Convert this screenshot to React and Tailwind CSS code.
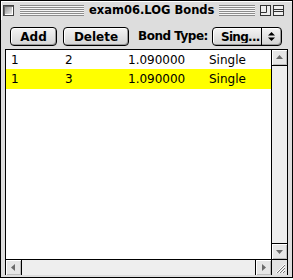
import React from 'react'

const rows = [
  { a: '1', b: '2', len: '1.090000', type: 'Single', selected: false },
  { a: '1', b: '3', len: '1.090000', type: 'Single', selected: true },
]

function Stripes({ className = '' }) {
  return (
    <div
      className={`h-[11px] bg-[image:repeating-linear-gradient(to_bottom,#8c8c8c_0px,#8c8c8c_1px,#f6f6f6_1px,#f6f6f6_2px)] ${className}`}
    />
  )
}

function ArrowBox({ dir, className = '' }) {
  const paths = {
    up: 'M1 6 L4.5 2 L8 6 Z',
    down: 'M1 3 L4.5 7 L8 3 Z',
    left: 'M6 1 L2 4.5 L6 8 Z',
    right: 'M3 1 L7 4.5 L3 8 Z',
  }
  return (
    <div className={`w-[15px] h-[15px] flex items-center justify-center bg-[#e6e6e6] shadow-[inset_1px_1px_0_#fff,inset_-1px_-1px_0_#bbb] ${className}`}>
      <svg width="9" height="9" viewBox="0 0 9 9">
        <path d={paths[dir]} fill="#6b6b6b" />
      </svg>
    </div>
  )
}

function Button({ children, className = '' }) {
  return (
    <button className={`shrink-0 h-[19px] rounded-[4px] border border-black bg-[linear-gradient(#f4f4f4,#d4d4d4)] shadow-[inset_1px_1px_0_#fff,inset_-1px_-1px_0_#999] text-[12px] font-bold leading-none text-black ${className}`}>
      {children}
    </button>
  )
}

export default function App() {
  return (
    <div className="w-[293px] h-[280px] bg-white font-['DejaVu_Sans',sans-serif]">
      <div className="w-[293px] h-[278px] border border-black bg-[#dddddd] flex flex-col">
        {/* title bar */}
        <div className="h-[19px] flex items-center pl-[2px] pr-[8px] shadow-[inset_1px_1px_0_#fff]">
          <div className="shrink-0 w-[11px] h-[11px] border border-[#444] bg-[linear-gradient(135deg,#8a8a8a,#f2f2f2)] shadow-[inset_1px_1px_0_#666,inset_-1px_-1px_0_#fff]" />
          <Stripes className="w-[64px] ml-[6px] shrink-0" />
          <span className="px-[5px] text-[11.5px] font-bold leading-none text-black whitespace-nowrap">exam06.LOG Bonds</span>
          <Stripes className="flex-1" />
          <svg className="ml-[5px] shrink-0" width="11" height="11" viewBox="0 0 11 11">
            <rect x="0.5" y="0.5" width="10" height="10" fill="#eee" stroke="#333" />
            <path d="M0.5 7.5 H6.5 V0.5" fill="none" stroke="#333" />
          </svg>
          <svg className="ml-[2px] shrink-0" width="11" height="11" viewBox="0 0 11 11">
            <rect x="0.5" y="0.5" width="10" height="10" fill="#eee" stroke="#333" />
            <path d="M0.5 4.5 H10.5 M0.5 6.5 H10.5" fill="none" stroke="#333" />
          </svg>
        </div>

        <div className="flex-1 flex flex-col px-[4px] pb-[2px]">
          {/* toolbar */}
          <div className="h-[29px] flex items-start pt-[7px] pl-[5px]">
            <Button className="w-[47px]">Add</Button>
            <Button className="w-[66px] ml-[6px]">Delete</Button>
            <span className="shrink-0 w-[67px] ml-[9px] mt-[1px] text-[12px] font-bold leading-[16px] tracking-[-0.5px] text-black whitespace-nowrap">Bond Type:</span>
            <div className="shrink-0 ml-[7px] w-[70px] h-[19px] rounded-[4px] border border-black bg-[linear-gradient(#f4f4f4,#d4d4d4)] shadow-[inset_1px_1px_0_#fff,inset_-1px_-1px_0_#999] flex items-center">
              <span className="shrink-0 w-[48px] pl-[8px] text-[12px] font-bold leading-none tracking-[-0.7px] whitespace-nowrap overflow-hidden">Sing...</span>
              <div className="h-full border-l border-black flex-1 flex items-center justify-center">
                <svg width="9" height="11" viewBox="0 0 9 11">
                  <path d="M1 4.5 L4.5 1 L8 4.5 Z M1 6.5 L4.5 10 L8 6.5 Z" fill="#000" />
                </svg>
              </div>
            </div>
          </div>

          {/* list box */}
          <div className="h-[226px] border border-black bg-white grid grid-cols-[265px_16px] grid-rows-[209px_16px]">
            <div className="text-[12px] text-black leading-none">
              {rows.map((r, i) => (
                <div
                  key={i}
                  className={`flex items-center pl-[5px] ${i === 0 ? 'h-[19px]' : 'h-[20px]'} ${r.selected ? 'bg-[#ffff00]' : ''}`}
                >
                  <span className="w-[54px]">{r.a}</span>
                  <span className="w-[63px]">{r.b}</span>
                  <span className="w-[81px]">{r.len}</span>
                  <span>{r.type}</span>
                </div>
              ))}
            </div>

            {/* vertical scrollbar */}
            <div className="border-l border-black bg-[#eeeeee] flex flex-col justify-between">
              <ArrowBox dir="up" className="border-b border-black h-[16px]" />
              <ArrowBox dir="down" className="border-t border-black h-[16px]" />
            </div>

            {/* horizontal scrollbar */}
            <div className="border-t border-black bg-[#eeeeee] flex justify-between">
              <ArrowBox dir="left" className="border-r border-black w-[16px]" />
              <ArrowBox dir="right" className="border-l border-black w-[16px]" />
            </div>

            {/* grow box */}
            <div className="border-l border-t border-black bg-[#e2e2e2] flex items-center justify-center">
              <svg width="15" height="15" viewBox="0 0 15 15">
                <path d="M4 13 L13 4 M7 13 L13 7 M10 13 L13 10" stroke="#fff" strokeWidth="1" />
                <path d="M5 13 L13 5 M8 13 L13 8 M11 13 L13 11" stroke="#777" strokeWidth="1" />
              </svg>
            </div>
          </div>
        </div>
      </div>
    </div>
  )
}
